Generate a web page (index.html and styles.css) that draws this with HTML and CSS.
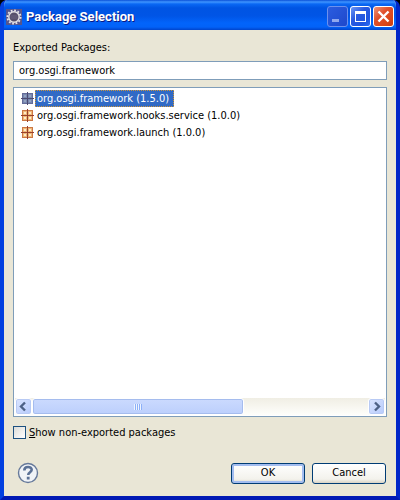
FILE: index.html
```html
<!DOCTYPE html>
<html lang="en">
<head>
    <meta charset="utf-8">
    <title>Package Selection</title>
    <link rel="stylesheet" href="styles.css">
</head>
<body>
    <!-- Shared icon shapes -->
    <svg class="defs" aria-hidden="true">
        <symbol id="package" viewBox="0 0 13 13">
            <path d="M1 1h11v11H1z" fill="var(--edge)"/>
            <path d="M2 2h9v9H2z" fill="var(--fill)"/>
            <path d="M3 3h2v2H3zM8 3h2v2H8zM3 8h2v2H3zM8 8h2v2H8z" fill="var(--shine)"/>
            <path d="M6.5 0v13M0 6.5h13" stroke="var(--cross)"/>
        </symbol>
    </svg>

    <div class="window">
        <!-- Title Bar -->
        <div class="title-bar">
            <svg class="app-icon" viewBox="0 0 16 16" aria-hidden="true">
                <rect width="16" height="16" fill="#55558c"/>
                <circle cx="8" cy="8" r="6.6" fill="none" stroke="#e4e2e6" stroke-width="1.8" stroke-dasharray="1.8 1.65"/>
                <circle cx="8" cy="8" r="5.2" fill="#57506c" stroke="#e4e2e6" stroke-width="1.4"/>
                <path d="M4.5 7h7M4.5 9h7" stroke="#6b6280"/>
            </svg>
            <h1 class="title">Package Selection</h1>
            <div class="caption-buttons">
                <button class="caption-button minimize" aria-label="Minimize" disabled>
                    <svg viewBox="0 0 19 19"><path d="M4 12h7v3H4z" fill="#8fa8ee"/></svg>
                </button>
                <button class="caption-button" aria-label="Maximize">
                    <svg viewBox="0 0 19 19"><path d="M4 4h11v11H4zM5 7v7h9V7z" fill="#fff" fill-rule="evenodd"/></svg>
                </button>
                <button class="caption-button close" aria-label="Close">
                    <svg viewBox="0 0 19 19"><path d="M4.5 4.5l10 10M14.5 4.5l-10 10" stroke="#fff" stroke-width="2.4"/></svg>
                </button>
            </div>
        </div>

        <!-- Dialog Content -->
        <form class="content">
            <label class="label" for="filter">Exported Packages:</label>
            <input id="filter" class="filter" type="text" value="org.osgi.framework">

            <div class="list">
                <ul class="packages" role="listbox" aria-label="Packages">
                    <li class="package selected" role="option" aria-selected="true">
                        <svg class="package-icon" aria-hidden="true"><use href="#package"/></svg>
                        <span class="package-name">org.osgi.framework (1.5.0)</span>
                    </li>
                    <li class="package" role="option" aria-selected="false">
                        <svg class="package-icon" aria-hidden="true"><use href="#package"/></svg>
                        <span class="package-name">org.osgi.framework.hooks.service (1.0.0)</span>
                    </li>
                    <li class="package" role="option" aria-selected="false">
                        <svg class="package-icon" aria-hidden="true"><use href="#package"/></svg>
                        <span class="package-name">org.osgi.framework.launch (1.0.0)</span>
                    </li>
                </ul>
                <div class="scrollbar">
                    <button type="button" class="arrow" aria-label="Scroll left">
                        <svg viewBox="0 0 15 15"><path d="M9 3.5l-4 4 4 4" fill="none" stroke="#4d6185" stroke-width="2.4"/></svg>
                    </button>
                    <div class="track">
                        <div class="thumb"><span class="grip"></span></div>
                    </div>
                    <button type="button" class="arrow" aria-label="Scroll right">
                        <svg viewBox="0 0 15 15"><path d="M6 3.5l4 4-4 4" fill="none" stroke="#4d6185" stroke-width="2.4"/></svg>
                    </button>
                </div>
            </div>

            <label class="option">
                <input class="checkbox" type="checkbox">
                <span><u>S</u>how non-exported packages</span>
            </label>

            <div class="footer">
                <button type="button" class="help" aria-label="Help">
                    <svg viewBox="0 0 22 22">
                        <circle cx="11" cy="11" r="9.5" fill="#f0f3f7" stroke="#66799a" stroke-width="1.4"/>
                        <path d="M7.3 8.4c0-4.6 7.4-4.4 7.4-.6 0 2.5-3.5 2.4-3.5 5.2" fill="none" stroke="#5b7196" stroke-width="2.6"/>
                        <path d="M9.8 14.8h2.8v2.6H9.8z" fill="#5b7196"/>
                    </svg>
                </button>
                <button type="submit" class="button default">OK</button>
                <button type="button" class="button">Cancel</button>
            </div>
        </form>
    </div>
</body>
</html>
```

FILE: styles.css
```css
:root {
    --face: #e9e6d6;
    --field-border: #7f9db9;
    --highlight: #316ac5;
}

* {
    margin: 0;
    padding: 0;
    box-sizing: border-box;
}

body {
    height: 100vh;
    background-color: #000;
    color: #000;
    font-family: "DejaVu Sans Condensed", Tahoma, sans-serif;
    font-size: 11px;
    line-height: 14px;
}

svg {
    display: block;
}

button,
input {
    font: inherit;
    color: inherit;
}

.defs {
    display: none;
}

/* Window Frame */
.window {
    height: 100%;
    display: flex;
    flex-direction: column;
    border-radius: 7px 7px 0 0;
    overflow: hidden;
    background-color: var(--face);
    border: 4px solid #0240e0;
    border-top: none;
    border-right-color: #0026c8;
    border-bottom-color: #0019b4;
}

/* Title Bar */
.title-bar {
    height: 30px;
    flex: none;
    display: flex;
    align-items: center;
    gap: 4px;
    margin: 0 -4px;
    padding: 3px 6px 0;
    background: linear-gradient(#0a50d8 0, #3f95ff 2px, #0a68f4 4px, #0054e3 8px, #0055e6 16px, #0264fb 23px, #0262f8 27px, #0044cc 30px);
}

.app-icon {
    width: 16px;
    height: 16px;
}

.title {
    flex: 1;
    color: #fff;
    font-family: Roboto, sans-serif;
    font-size: 13px;
    font-weight: bold;
    line-height: 18px;
    text-shadow: 1px 1px #0a1883;
}

.caption-buttons {
    display: flex;
    gap: 2px;
}

.caption-button {
    width: 21px;
    height: 21px;
    border: 1px solid #fff;
    border-radius: 3px;
    background: linear-gradient(135deg, #6c97f4, #2a5ae0 40%, #1f55e0 75%, #2c6cf4);
}

.minimize {
    border-color: #6d91ed;
    background: linear-gradient(135deg, #2b5de0, #1e48cb);
}

.close {
    background: linear-gradient(135deg, #ee9478, #e0502c 40%, #da4717 75%, #c63c12);
}

/* Dialog Content */
.content {
    flex: 1;
    display: flex;
    flex-direction: column;
    padding: 11px 9px 12px;
}

.label {
    line-height: 14px;
    margin-bottom: 6px;
}

.filter {
    width: 100%;
    height: 19px;
    padding: 0 5px;
    border: 1px solid var(--field-border);
    background-color: #fff;
    outline: none;
}

/* Package List */
.list {
    flex: 1;
    display: flex;
    flex-direction: column;
    margin: 7px 0 8px;
    padding: 1px;
    border: 1px solid var(--field-border);
    background-color: #fff;
}

.packages {
    flex: 1;
    list-style: none;
    padding: 1px 0 0 6px;
}

.package {
    --fill: #f0b878;
    --shine: #fdeccb;
    --edge: #cc7844;
    --cross: #98402c;
    height: 17px;
    display: flex;
    align-items: center;
    gap: 1px;
    white-space: nowrap;
}

.package-icon {
    width: 13px;
    height: 13px;
}

.package-name {
    padding: 0 4px 0 1px;
    border: 1px solid transparent;
    line-height: 15px;
}

.selected {
    --fill: #7888b0;
    --shine: #94a2c0;
    --edge: #646c98;
    --cross: #4c4a70;
}

.selected .package-name {
    color: #fff;
    background-color: var(--highlight);
    border: 1px dotted #ce953a;
}

/* Scrollbar */
.scrollbar {
    height: 17px;
    flex: none;
    display: flex;
    background: linear-gradient(#f0eee4, #fefefb);
}

.arrow {
    width: 17px;
    height: 17px;
    border: 1px solid #fff;
    border-radius: 3px;
    background: linear-gradient(135deg, #dbe5ff, #b6cafb);
    box-shadow: inset 0 0 0 1px #b8caf4;
}

.track {
    flex: 1;
}

.thumb {
    width: 63%;
    height: 17px;
    display: flex;
    align-items: center;
    justify-content: center;
    border: 1px solid #fff;
    border-radius: 3px;
    background: linear-gradient(#cbdafe, #bccffc);
    box-shadow: inset 0 0 0 1px #a5bcee;
}

.grip {
    width: 8px;
    height: 6px;
    background: repeating-linear-gradient(90deg, #eef4fe 0 1px, #8cb0f8 1px 2px);
}

/* Checkbox */
.option {
    display: flex;
    align-items: center;
    gap: 3px;
    align-self: flex-start;
    line-height: 15px;
}

.checkbox {
    appearance: none;
    width: 13px;
    height: 13px;
    border: 1px solid #1c5180;
    background: linear-gradient(135deg, #dcdcd7, #fff);
}

.checkbox:checked {
    background: #21a121;
}

/* Footer */
.footer {
    display: flex;
    align-items: center;
    gap: 7px;
    margin-top: 22px;
    padding-right: 1px;
}

.help {
    width: 22px;
    height: 22px;
    margin: 0 auto 0 4px;
    border: none;
    background: none;
}

.button {
    width: 74px;
    height: 21px;
    border: 1px solid #003c74;
    border-radius: 3px;
    background: linear-gradient(#fff, #f3f2ec 80%, #d8d2c4);
}

.default {
    box-shadow: inset 0 0 0 2px #a3bdf0;
}
```
